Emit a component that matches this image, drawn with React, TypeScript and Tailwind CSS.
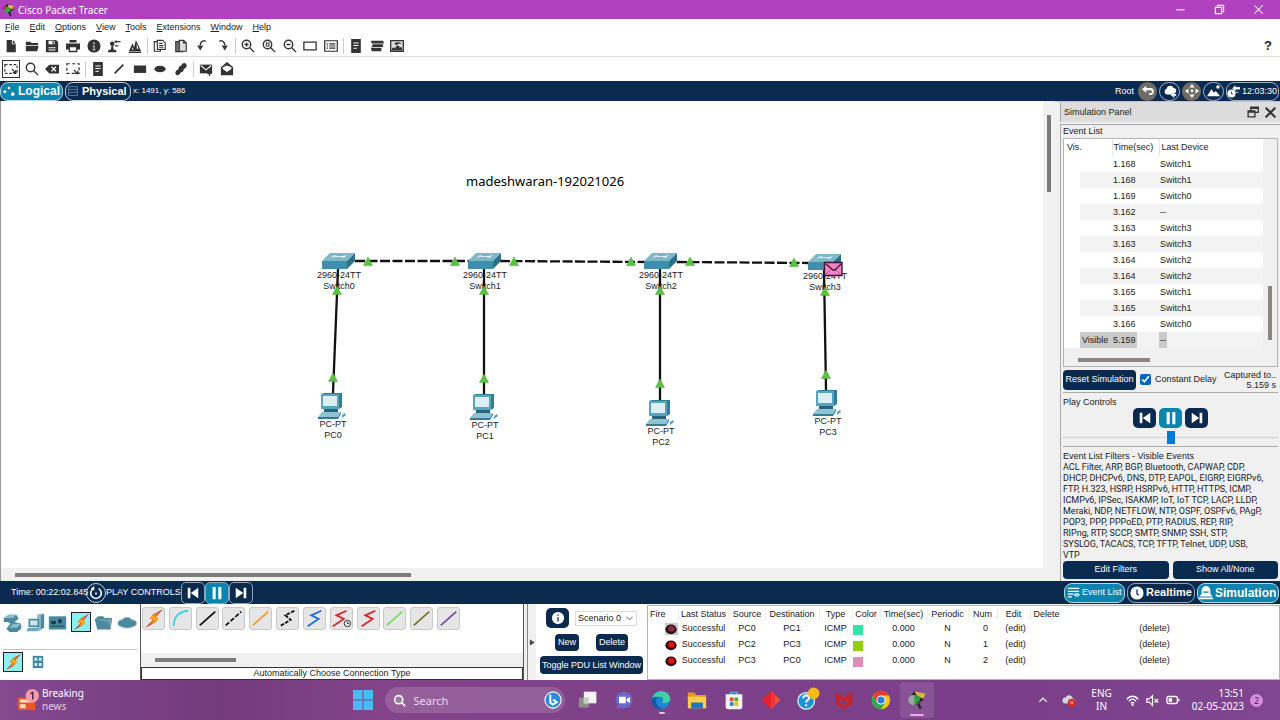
import { useState, type ReactNode } from "react";

const ARIAL = "font-['Liberation_Sans',Arial,sans-serif]";
const NOTO = "font-['Noto_Sans','Open_Sans',sans-serif]";

function Ic({ children, className = "size-3.5", box = "0 0 16 16" }: { children: ReactNode; className?: string; box?: string }) {
  return (
    <svg viewBox={box} className={className + " shrink-0"} aria-hidden="true">
      {children}
    </svg>
  );
}

const dark = "#333333";

const icons: Record<string, ReactNode> = {
  New: <path d="M3 1h6v5h4.500v9H3zM10 1l3.500 4H10z" fill={dark} />,
  Open: <path d="M1 3h5l1.500 1.500H15V7H1zM1 8h14.500L14 14H1z" fill={dark} />,
  Save: <path fillRule="evenodd" d="M1 1h11.500L15 3.500V15H1zM4 2v4h7V2zM8.500 2.600h1.600v2.700H8.500zM4 9.500v1h8v-1zM4 12v1h8v-1z" fill={dark} />,
  Print: <path fillRule="evenodd" d="M4 1h8v3H4zM0 5h16v7h-3v3H3v-3H0zM4.500 9.500v4h7v-4z" fill={dark} />,
  Information: (
    <>
      <circle cx="8" cy="8" r="7.500" fill={dark} />
      <path d="M7 3.500h2V6H7zM6.500 7H9v4.500h.8V13H6.200v-1.500H7V8.500h-.5z" fill="#999" />
    </>
  ),
  "User Profile": (
    <>
      <circle cx="6" cy="5.500" r="2.600" fill={dark} />
      <path d="M1 15c0-2 1-2.500 3.500-3L5 8h2l.5 4c2.500.5 3.500 1 3.500 3zM8 3l3-2v1.200h4.500v1.600H11V5zM9 7h4v1.500H9z" fill={dark} />
    </>
  ),
  Activity: <path d="M1 14L5 5l2 4 2-8 6 13zM1 14.500h14V16H1zM10 5v6h2zM4.500 9v3h2z" fill={dark} fillRule="evenodd" />,
  Copy: (
    <g fill="#fff" stroke={dark} strokeWidth="1.300">
      <path d="M1.500 3h7v11h-7z" />
      <path d="M5 1.500h6l3 3V12H5z" />
      <path d="M7 5h4M7 7.500h5M7 10h5" />
    </g>
  ),
  Paste: (
    <g stroke={dark} strokeWidth="1.300">
      <path d="M2 3h8v11.500H2z" fill="#777" />
      <path d="M6 1.500h5l3 3v9.500H6z" fill="#ddd" />
      <path d="M11 1.500v3h3" fill="none" />
    </g>
  ),
  Undo: (
    <>
      <path d="M6 7C6 2 11 1 12 3" fill="none" stroke={dark} strokeWidth="1.500" />
      <path d="M2.500 7.500h7L6 13z" fill={dark} />
    </>
  ),
  Redo: (
    <>
      <path d="M10 7C10 2 5 1 4 3" fill="none" stroke={dark} strokeWidth="1.500" />
      <path d="M6.500 7.500h7L10 13z" fill={dark} />
    </>
  ),
  "Zoom In": (
    <g fill="none" stroke={dark} strokeWidth="1.600">
      <circle cx="6.300" cy="6.300" r="4.800" />
      <path d="M10 10l5 5M4 6.300h4.600M6.300 4v4.600" />
    </g>
  ),
  "Zoom Reset": (
    <g fill="none" stroke={dark} strokeWidth="1.600">
      <circle cx="6.300" cy="6.300" r="4.800" />
      <path d="M10 10l5 5" />
      <path d="M5 4.500h3v3.500H5z" strokeWidth="1.200" />
    </g>
  ),
  "Zoom Out": (
    <g fill="none" stroke={dark} strokeWidth="1.600">
      <circle cx="6.300" cy="6.300" r="4.800" />
      <path d="M10 10l5 5M4 6.300h4.600" />
    </g>
  ),
  "Drawing Palette": <path d="M1 3.500h14v9H1z" fill="none" stroke={dark} strokeWidth="1.500" />,
  "Custom Devices": (
    <g fill="none" stroke={dark} strokeWidth="1.400">
      <path d="M.8 2h14.400v12H.8z" />
      <path d="M3 5.500h1.500M6 5.500h7M3 8h1.500M6 8h7M3 10.500h1.500M6 10.500h7" />
    </g>
  ),
  "View Notes": (
    <>
      <path d="M2.500 0h11v16h-11z" fill={dark} />
      <path d="M5 4.500h6M5 7.500h6M5 10.500h4" stroke="#fff" strokeWidth="1.200" />
    </>
  ),
  "Device Rack": <path d="M1 2h14l1 3H2zM3 6h12v3H2zM1 10h12v4H2z" fill={dark} />,
  "Cluster View": (
    <>
      <path d="M.8 1.800h14.400v12.400H.8z" fill="#ddd" stroke={dark} strokeWidth="1.500" />
      <path d="M2 13c0-4 3-4 4-2 1-5 5-4 5-1 2-2 3 0 3 3zM5 5c2-2 7-2 8 1l-3-1-3 2z" fill={dark} />
    </>
  ),
  Select: (
    <g fill="none" stroke={dark} strokeWidth="1.300">
      <path d="M1 3h14v10H1z" strokeDasharray="3 2" />
      <path d="M9 8l5 5M10 12h3.500V9" />
    </g>
  ),
  Inspect: (
    <g fill="none" stroke={dark} strokeWidth="1.600">
      <circle cx="6.300" cy="6.300" r="4.800" />
      <path d="M10 10l5 5" />
    </g>
  ),
  Delete: (
    <>
      <path d="M0 8l5-5h11v10H5z" fill={dark} />
      <path d="M7.500 5.500l5 5M12.500 5.500l-5 5" stroke="#fff" strokeWidth="1.500" />
    </>
  ),
  Resize: (
    <g fill="none" stroke={dark} strokeWidth="1.400">
      <path d="M1 2h14v11H1z" strokeDasharray="3.500 2.500" />
      <path d="M9 9l5 5M10 13h3.500v-3" />
    </g>
  ),
  "Draw Line": <path d="M3 13L13 3" stroke={dark} strokeWidth="1.800" />,
  "Draw Rectangle": <path d="M1 4h14v8.500H1z" fill={dark} />,
  "Draw Ellipse": <ellipse cx="8" cy="8" rx="6.500" ry="3.600" fill={dark} />,
  "Draw Freeform": <path d="M2.500 14.500c-2-2-.5-5.500 2.500-6 0-3 2-4.500 3.500-4.500 1-4 6-3.500 6 0 0 2-1.500 3.500-3.500 4 .500 3-2 3.500-3.500 4-1 3-3.500 4-5 2.500z" fill={dark} />,
  "Simple PDU": (
    <>
      <path d="M1 3h14v10H1z" fill={dark} />
      <path d="M2 4l6 5 6-5" fill="none" stroke="#fff" strokeWidth="1.300" />
      <path d="M12 10v6M9.500 13h5" stroke={dark} strokeWidth="1.500" />
    </>
  ),
  "Complex PDU": (
    <>
      <path d="M1 6l7-6 7 6v9H1z" fill={dark} />
      <path d="M3 6l5-2 5 2v2l-5 3.500L3 8z" fill="#fff" />
    </>
  ),
};

function ToolGroup({ names, className, active }: { names: string[]; className: string; active?: string }) {
  return (
    <div className={"flex items-center justify-between " + className}>
      {names.map((name) => (
        <button key={name} type="button" aria-label={name} className={active === name ? "-m-px outline outline-[#333] p-px" : ""}>
          <Ic>{icons[name]}</Ic>
        </button>
      ))}
    </div>
  );
}

function Sep() {
  return <span className="mx-[5px] h-4 w-px bg-[#cccccc]" />;
}

const menu = ["File", "Edit", "Options", "View", "Tools", "Extensions", "Window", "Help"];

function TitleBar() {
  return (
    <header className={`flex h-[19px] items-center bg-[#b042c0] pl-0.5 text-white ${NOTO}`}>
      <Ic className="size-[14px]">
        <path d="M1 6l5-5 8 2-1 5-6 4z" fill="#3b2c24" />
        <path d="M7 2l7 1-2 4-5-2z" fill="#f2b53c" />
        <path d="M3 5c3-2 7 0 7 3 0 2-3 4-5 3S2 7 3 5z" fill="#2fae3c" />
        <path d="M2 4l3 1-1 3H2z" fill="#d23a32" />
        <path d="M8 10l2 5" stroke="#222" strokeWidth="2" />
      </Ic>
      <h1 className="ml-0.5 grow text-[10px] leading-none">Cisco Packet Tracer</h1>
      <div className="flex items-center gap-7 pr-4">
        <button type="button" aria-label="Minimize"><Ic className="size-[11px]"><path d="M2 8.500h12" stroke="#fff" strokeWidth="1.500" /></Ic></button>
        <button type="button" aria-label="Restore">
          <Ic className="size-[11px]"><path d="M2 5h9v9H2zM5 5V2h9v9h-3" fill="none" stroke="#fff" strokeWidth="1.700" /></Ic>
        </button>
        <button type="button" aria-label="Close"><Ic className="size-[11px]"><path d="M2 2l12 12M14 2L2 14" stroke="#fff" strokeWidth="1.500" /></Ic></button>
      </div>
    </header>
  );
}

function Toolbars() {
  return (
    <>
      <nav className="flex h-4 items-center gap-2.5 bg-white pl-[5px]">
        {menu.map((item) => (
          <button key={item} type="button" className="text-[9px] leading-none">
            <span className="underline underline-offset-1">{item[0]}</span>
            {item.slice(1)}
          </button>
        ))}
      </nav>
      <div className="flex h-[22px] items-center border-b border-[#dddddd] bg-white pr-2 pl-1">
        <ToolGroup className="w-[138px]" names={["New", "Open", "Save", "Print", "Information", "User Profile", "Activity"]} />
        <Sep />
        <ToolGroup className="w-[77px]" names={["Copy", "Paste", "Undo", "Redo"]} />
        <Sep />
        <ToolGroup className="w-[97px]" names={["Zoom In", "Zoom Reset", "Zoom Out", "Drawing Palette", "Custom Devices"]} />
        <Sep />
        <ToolGroup className="w-[55px]" names={["View Notes", "Device Rack", "Cluster View"]} />
        <button type="button" className="ml-auto text-[13px] leading-none font-bold text-[#222]">?</button>
      </div>
      <div className="flex h-6 items-center bg-white pl-1">
        <ToolGroup className="w-[76px]" active="Select" names={["Select", "Inspect", "Delete", "Resize"]} />
        <Sep />
        <ToolGroup className="w-[97px]" names={["View Notes", "Draw Line", "Draw Rectangle", "Draw Ellipse", "Draw Freeform"]} />
        <Sep />
        <ToolGroup className="w-[35px]" names={["Simple PDU", "Complex PDU"]} />
      </div>
    </>
  );
}

function NavBar() {
  return (
    <div className="flex h-5 items-center bg-[#0a2a50] pr-px text-white">
      <button type="button" className="flex h-[19px] w-[63px] items-center gap-[3px] rounded-lg border border-[#b8d8e8] bg-[#0b84ae] pl-0.5 text-[12px] leading-none font-bold">
        <Ic className="size-3"><g fill="#fff"><circle cx="2.500" cy="9" r="2" /><circle cx="8" cy="4" r="1.800" /><circle cx="13" cy="12" r="2.500" /></g></Ic>
        Logical
      </button>
      <button type="button" className="ml-0.5 flex h-[19px] w-[66px] items-center gap-1 rounded-lg border border-[#c8d0dc] pl-0.5 text-[11px] leading-none font-bold">
        <Ic className="size-2.5"><path d="M1 1h14v14H1zM1 5.500h14M1 10h14" fill="none" stroke="#5c7ba2" strokeWidth="1.600" /></Ic>
        Physical
      </button>
      <span className="ml-0.5 grow text-[8px] leading-none">x: 1491, y: 586</span>
      <span className="mr-1 text-[9px] leading-none">Root</span>
      <div className="flex items-center gap-0.5">
        <button type="button" aria-label="Back" className="flex size-[19px] items-center justify-center rounded-full bg-[#6e6b62]">
          <Ic><path d="M1 6l5-4v2.500h5c5 0 5 8 0 8H9v-2h2c2 0 2-3.500 0-3.500H6V10z" fill="#fff" /></Ic>
        </button>
        <button type="button" aria-label="New Cluster" className="flex h-[19px] w-[21px] items-center justify-center rounded-full border border-[#9fb0c6]">
          <Ic><path d="M4 12a3.500 3.500 0 010-6.500C5 1 11 1 12 4.500c4 0 4 5 1 6.500v-1h-2v2z" fill="#fff" /><path d="M12 9.500v6M9 12.500h6" stroke="#fff" strokeWidth="2" /></Ic>
        </button>
        <button type="button" aria-label="Move Object" className="flex size-[19px] items-center justify-center rounded-full bg-[#6e6b62]">
          <Ic><path d="M8 0l3 4H5zM8 16l3-4H5zM0 8l4-3v6zM16 8l-4-3v6z" fill="#fff" /><circle cx="8" cy="8" r="1.600" fill="#fff" /></Ic>
        </button>
        <button type="button" aria-label="Set Background" className="flex h-[19px] w-[21px] items-center justify-center rounded-full border border-[#9fb0c6]">
          <Ic><path d="M0 14l5-8 3 4 2-2 5 6z" fill="#fff" /><circle cx="12.500" cy="3.500" r="2" fill="#fff" /></Ic>
        </button>
        <button type="button" className="flex h-[19px] w-[53px] items-center gap-0.5 rounded-lg border border-[#9fb0c6] text-[9px] leading-none whitespace-nowrap">
          <Ic className="size-[13px]"><circle cx="5.500" cy="10.500" r="5" fill="#fff" /><path d="M7 4l3-3v2h6v2h-6v2zM10 9h4" stroke="#fff" fill="#fff" /><path d="M5.500 8v3h2" stroke="#0a2a50" fill="none" /></Ic>
          12:03:30
        </button>
      </div>
    </div>
  );
}

const switches = [
  { name: "Switch0", x: 339, y: 152 },
  { name: "Switch1", x: 485, y: 152 },
  { name: "Switch2", x: 661, y: 152 },
  { name: "Switch3", x: 825, y: 153 },
];
const pcs = [
  { name: "PC0", x: 332, y: 292 },
  { name: "PC1", x: 484, y: 293 },
  { name: "PC2", x: 660, y: 299 },
  { name: "PC3", x: 827, y: 289 },
];
const trunks = [
  [355, 160, 470, 160],
  [500, 160, 646, 161],
  [677, 161, 809, 162],
];
const drops = [
  [338, 168, 333, 292],
  [484, 168, 484, 293],
  [660, 168, 660, 299],
  [824, 169, 826, 289],
];
const lights = [
  [368, 161], [455, 161], [514, 161], [631, 161], [690, 161], [794, 162],
  [337, 190], [333, 277], [484, 190], [484, 278], [660, 190], [660, 283], [825, 191], [826, 274],
];

function NodeLabel({ x, y, lines }: { x: number; y: number; lines: string[] }) {
  return (
    <div className="absolute -translate-x-1/2 text-center text-[9px] leading-[11px] whitespace-nowrap text-[#222]" style={{ left: x, top: y }}>
      {lines.map((line) => (
        <div key={line}>{line}</div>
      ))}
    </div>
  );
}

function Workspace() {
  return (
    <section className="flex min-w-0 grow flex-col">
      <div className="flex grow">
        <div className="relative grow overflow-hidden border-l border-[#999] bg-white">
          <p className={`absolute top-[71px] left-[465px] text-[13px] leading-[18px] whitespace-nowrap text-black ${NOTO}`}>madeshwaran-192021026</p>
          {switches.map((s) => (
            <NodeLabel key={s.name} x={s.x - 1} y={s.y + 17} lines={["2960-24TT", s.name]} />
          ))}
          {pcs.map((p) => (
            <NodeLabel key={p.name} x={p.x} y={p.y + 26} lines={["PC-PT", p.name]} />
          ))}
          <svg className="absolute top-0 -left-px h-full w-full overflow-visible" aria-hidden="true">
            {trunks.map(([x1, y1, x2, y2]) => (
              <line key={x1} x1={x1} y1={y1} x2={x2} y2={y2} stroke="#111" strokeWidth="2.300" strokeDasharray="10 2.500" />
            ))}
            {drops.map(([x1, y1, x2, y2]) => (
              <line key={x1} x1={x1} y1={y1} x2={x2} y2={y2} stroke="#111" strokeWidth="2.300" />
            ))}
            {switches.map((s) => (
              <g key={s.name} transform={`translate(${s.x - 17} ${s.y})`}>
                <path d="M0 8L8 0h25l-8 8z" fill="#7fb6c8" />
                <path d="M0 8h25v8H0z" fill="#3f8fa8" />
                <path d="M25 8l8-8v8l-8 8z" fill="#2b7088" />
                <path d="M8 5l4-3 3 1h6l4-1-3 3-4-1h-6z" fill="#d8eef4" />
              </g>
            ))}
            {pcs.map((p) => (
              <g key={p.name} transform={`translate(${p.x - 14} ${p.y})`}>
                <path d="M3 1l3-1h18v14l-3 2H3z" fill="#2f7d96" />
                <path d="M3 1h18v15H3z" fill="#57a5ba" />
                <path d="M5 3h14v10H5z" fill="#dceef2" />
                <path d="M6 16h14v4H6z" fill="#22667d" />
                <path d="M4 19h19l-3 5H0z" fill="#8fc3d1" />
                <path d="M0 24h20l3-5v2l-3 5H0z" fill="#2f7d96" />
                <path d="M24 22l3-2 1 2-4 3z" fill="#57a5ba" />
              </g>
            ))}
            {lights.map(([x, y]) => (
              <path key={`${x}-${y}`} d={`M${x} ${y - 5}l4.500 8.500h-9z`} fill="#5cc13f" stroke="#4aa833" strokeWidth=".5" />
            ))}
            <path d="M824.500 161.500h17.500v13h-17.500z" fill="#f583c8" stroke="#3a1530" strokeWidth="1.400" />
            <path d="M826 163l7 6h2l6-6" fill="none" stroke="#3a1530" strokeWidth="1.300" />
            <path d="M825 174l5-5M841 174l-5-5" stroke="#b04c8c" strokeWidth=".8" />
          </svg>
        </div>
        <div className="flex w-3 shrink-0 justify-center bg-[#f1f1f1] pt-3.5">
          <div className="h-[77px] w-1 bg-[#7c7c7c]" />
        </div>
      </div>
      <div className="flex h-[13px] items-center border-l border-[#999] bg-[#f1f1f1] pl-3.5">
        <div className="h-1 w-[396px] bg-[#7c7c7c]" />
      </div>
    </section>
  );
}

const events = [
  ["", "1.168", "Switch1"],
  ["", "1.168", "Switch1"],
  ["", "1.169", "Switch0"],
  ["", "3.162", "--"],
  ["", "3.163", "Switch3"],
  ["", "3.163", "Switch3"],
  ["", "3.164", "Switch2"],
  ["", "3.164", "Switch2"],
  ["", "3.165", "Switch1"],
  ["", "3.165", "Switch1"],
  ["", "3.166", "Switch0"],
  ["Visible", "5.159", "--"],
];

const filters = [
  "ACL Filter, ARP, BGP, Bluetooth, CAPWAP, CDP,",
  "DHCP, DHCPv6, DNS, DTP, EAPOL, EIGRP, EIGRPv6,",
  "FTP, H.323, HSRP, HSRPv6, HTTP, HTTPS, ICMP,",
  "ICMPv6, IPSec, ISAKMP, IoT, IoT TCP, LACP, LLDP,",
  "Meraki, NDP, NETFLOW, NTP, OSPF, OSPFv6, PAgP,",
  "POP3, PPP, PPPoED, PTP, RADIUS, REP, RIP,",
  "RIPng, RTP, SCCP, SMTP, SNMP, SSH, STP,",
  "SYSLOG, TACACS, TCP, TFTP, Telnet, UDP, USB,",
  "VTP",
];

const prevIcon = <path d="M2 2h3v12H2zM14 2v12L5.500 8z" fill="#fff" />;
const pauseIcon = <path d="M3 1h3.500v14H3zM9.500 1H13v14H9.500z" fill="#fff" />;
const nextIcon = <path d="M11 2h3v12h-3zM2 2l8.500 6L2 14z" fill="#fff" />;

function PlayButtons({ outlined }: { outlined?: boolean }) {
  const edge = outlined ? "border border-[#8fa3bd] h-[22px] w-6" : "h-5 w-[23px]";
  const list = [
    { label: "Step back", icon: prevIcon, bg: "bg-[#0a2a50]" },
    { label: "Pause", icon: pauseIcon, bg: "bg-[#0b84ae]" },
    { label: "Step forward", icon: nextIcon, bg: "bg-[#0a2a50]" },
  ];
  return (
    <div className={outlined ? "flex" : "flex justify-center gap-[3px]"}>
      {list.map((b) => (
        <button key={b.label} type="button" aria-label={b.label} className={`flex items-center justify-center rounded-[5px] ${edge} ${b.bg}`}>
          <Ic className="size-3.5">{b.icon}</Ic>
        </button>
      ))}
    </div>
  );
}

function SimulationPanel() {
  const [constant, setConstant] = useState(true);
  return (
    <aside className="flex w-[225px] shrink-0 flex-col border-t border-[#c4c4c4] bg-[#f0f0f0] pl-[5px] text-[9px] text-[#222]">
      <div className="flex h-5 shrink-0 items-center border-l border-[#aaa] bg-[#dcdcdc] pr-1 pl-[3px]">
        <h2 className="grow leading-none">Simulation Panel</h2>
        <button type="button" aria-label="Float"><Ic className="size-3"><path d="M5 6V1.500h10v7h-4M1.500 6.500h9v8h-9zM1 8h10M5 3h10" fill="none" stroke="#333" strokeWidth="1.800" /></Ic></button>
        <button type="button" aria-label="Close panel" className="ml-1.5"><Ic className="size-[11px]"><path d="M1 1l14 14M15 1L1 15" stroke="#333" strokeWidth="3" /></Ic></button>
      </div>
      <div className="mt-0.5 flex grow flex-col border-t border-l border-[#aaa] pr-0.5 pl-0.5">
        <h3 className="h-[13px] leading-[13px]">Event List</h3>
        <div className="flex h-[229px] flex-col border border-[#b5b5b5]">
          <div className="flex grow">
            <table className="grow table-fixed border-collapse self-start bg-white text-left">
              <colgroup>
                <col className="w-4" />
                <col className="w-8" />
                <col className="w-[47px]" />
                <col />
              </colgroup>
              <thead>
                <tr className="h-[17px]">
                  <th colSpan={2} className="pl-[3px] font-normal">Vis.</th>
                  <th className="border-l border-[#e6e6e6] pl-px font-normal">Time(sec)</th>
                  <th className="border-l border-[#e6e6e6] pl-0.5 font-normal">Last Device</th>
                </tr>
              </thead>
              <tbody>
                {events.map(([vis, time, device], i) => {
                  const last = vis !== "";
                  const bg = i % 2 ? "bg-[#f3f3f3]" : "bg-white";
                  return (
                    <tr key={i} className="h-4 leading-4">
                      <td className="bg-white" />
                      <td className={`p-0 pl-0.5 ${last ? "bg-[#cacaca]" : bg}`}>{vis}</td>
                      <td className={bg}>
                        <span className={`inline-block px-px ${last ? "bg-[#cacaca]" : ""}`}>{time}</span>
                      </td>
                      <td className={bg}>
                        <span className={`inline-block px-px ${last ? "bg-[#cacaca]" : ""}`}>{device}</span>
                      </td>
                    </tr>
                  );
                })}
              </tbody>
            </table>
            <div className="flex w-3.5 shrink-0 items-end justify-center pb-3.5">
              <div className="h-[54px] w-1 bg-[#8a8783]" />
            </div>
          </div>
          <div className="flex h-3 shrink-0 items-center pl-3.5">
            <div className="h-1 w-[72px] bg-[#8a8783]" />
          </div>
        </div>
        <div className="flex h-[25px] items-center">
          <button type="button" className="h-5 w-[73px] rounded-[4px] bg-[#0a2a50] leading-none whitespace-nowrap text-white">Reset Simulation</button>
          <label className="ml-1 flex items-center gap-1 whitespace-nowrap">
            <input type="checkbox" checked={constant} onChange={(e) => setConstant(e.target.checked)} className="size-[11px] accent-[#0067c0]" />
            Constant Delay
          </label>
          <div className="ml-auto pr-0.5 text-right text-[9px] leading-2.5 whitespace-nowrap">
            <div>Captured to..</div>
            <div>5.159 s</div>
          </div>
        </div>
        <div className="border-t border-[#aaa] pt-[3px]">
          <h3 className="h-3 leading-3">Play Controls</h3>
          <PlayButtons />
          <input
            type="range"
            aria-label="Play speed"
            defaultValue={50}
            className="my-0.5 block h-[14px] w-full appearance-none bg-[linear-gradient(#d2d2d2,#d2d2d2)] bg-[length:100%_1px] bg-center bg-no-repeat [&::-webkit-slider-thumb]:h-[13px] [&::-webkit-slider-thumb]:w-2 [&::-webkit-slider-thumb]:appearance-none [&::-webkit-slider-thumb]:bg-[#0078d7]"
          />
        </div>
        <div className="flex grow flex-col border-t border-[#aaa] pt-[3px] pb-0.5">
          <h3 className="h-3 leading-3">Event List Filters - Visible Events</h3>
          <p className="font-[Roboto,sans-serif] leading-[11px] whitespace-nowrap">
            {filters.map((line) => (
              <span key={line} className="block">{line}</span>
            ))}
          </p>
          <div className="mt-auto flex gap-1">
            <button type="button" className="h-[18px] grow basis-0 rounded-[4px] bg-[#0a2a50] text-white">Edit Filters</button>
            <button type="button" className="h-[18px] grow basis-0 rounded-[4px] bg-[#0a2a50] text-white">Show All/None</button>
          </div>
        </div>
      </div>
    </aside>
  );
}

function StatusBar() {
  return (
    <div className="flex h-[23px] items-center bg-[#0a2a50] pr-px pl-[11px] text-white">
      <span className="w-[75px] text-[9px] leading-none whitespace-nowrap">Time: 00:22:02.845</span>
      <button type="button" aria-label="Power cycle devices" className="flex size-5 items-center justify-center rounded-full border border-[#c8d0dc]">
        <Ic><path d="M5 3a6 6 0 106 0" fill="none" stroke="#fff" strokeWidth="1.800" /><path d="M6 0v5L2 3z" fill="#fff" /><circle cx="8" cy="8.500" r="1.200" fill="#fff" /></Ic>
      </button>
      <span className="w-[75px] text-[9px] leading-none whitespace-nowrap">PLAY CONTROLS:</span>
      <PlayButtons outlined />
      <div className="ml-auto flex items-center gap-0.5 leading-none">
        <button type="button" className="flex h-5 w-[61px] items-center gap-0.5 rounded-lg border border-[#b8d8e8] bg-[#0b84ae] pl-0.5 text-[9px] whitespace-nowrap">
          <Ic className="size-[13px]"><path d="M1 3h14M1 6.500h14M1 10h7M1 13.500h5M9 11q3-3 6 0-3 3-6 0" fill="none" stroke="#fff" strokeWidth="1.500" /></Ic>
          Event List
        </button>
        <button type="button" className="flex h-5 w-[68px] items-center gap-0.5 rounded-lg border border-[#8fa3bd] pl-0.5 text-[11px] font-bold">
          <Ic><circle cx="8" cy="8" r="7.500" fill="#fff" /><path d="M8 4v5l2 1.500" fill="none" stroke="#0a2a50" strokeWidth="1.500" /></Ic>
          Realtime
        </button>
        <button type="button" className="flex h-5 w-[82px] items-center gap-0.5 rounded-lg border border-[#b8d8e8] bg-[#0b84ae] pl-px text-[12px] font-bold">
          <Ic><path d="M3 9V5a5 5 0 0110 0v4l2 2v1H1v-1zM0 13h16v2H0z" fill="#fff" /><path d="M5 7h6" stroke="#0b84ae" strokeWidth="1.500" /></Ic>
          Simulation
        </button>
      </div>
    </div>
  );
}

const bolt = (
  <>
    <path d="M22 1L11 7l-4 5 5-1-3 4-7 7 11-6 4-5-5 1z" fill="#d63a25" />
    <path d="M18 4l-9 5-1 3 4 1-4 5 9-5-1-3-3-1z" fill="#f9a51c" />
  </>
);

const cables: { name: string; art: ReactNode }[] = [
  { name: "Automatic", art: bolt },
  { name: "Console", art: <path d="M4 20C4 9 10 4 20 3" fill="none" stroke="#45d3e4" strokeWidth="2" /> },
  { name: "Straight-Through", art: <path d="M3 19L20 4" stroke="#111" strokeWidth="2" /> },
  { name: "Cross-Over", art: <path d="M3 19L20 4" stroke="#111" strokeWidth="2" strokeDasharray="5 2" /> },
  { name: "Fiber", art: <path d="M3 19L20 4" stroke="#f0a030" strokeWidth="2" /> },
  { name: "Phone", art: <path d="M19 3L9 8l6 5-12 7" fill="none" stroke="#111" strokeWidth="2" strokeDasharray="4 1.500" /> },
  { name: "Coaxial", art: <path d="M19 3L8 8l8 4-12 8" fill="none" stroke="#1c6fd6" strokeWidth="2" /> },
  {
    name: "Serial DCE",
    art: (
      <>
        <path d="M17 3L6 8l8 4-12 8" fill="none" stroke="#d9262c" strokeWidth="2" />
        <circle cx="18" cy="17" r="3.500" fill="#eee" stroke="#222" />
        <path d="M18 15v2h2" fill="none" stroke="#222" />
      </>
    ),
  },
  { name: "Serial DTE", art: <path d="M19 3L8 8l8 4-12 8" fill="none" stroke="#d9262c" strokeWidth="2" /> },
  { name: "Octal", art: <path d="M3 19L20 4" stroke="#6fe25a" strokeWidth="2" /> },
  { name: "IoT Custom Cable", art: <path d="M3 19L20 4" stroke="#7a7626" strokeWidth="2" /> },
  { name: "USB", art: <path d="M3 19L20 4" stroke="#7a4fa5" strokeWidth="2" /> },
];

const teal = "#4a8a9c";
const deviceKinds: { name: string; art: ReactNode }[] = [
  {
    name: "Network Devices",
    art: (
      <>
        <path d="M1 6l6-4h9l3 5-5 4 8 2v6l-5 4H8l-4-4 5-6-3-2H1z" fill={teal} />
        <path d="M1 6l6-4h9l-4 4zM8 18l4-5h10l-5 5z" fill="#8dbccb" />
      </>
    ),
  },
  {
    name: "End Devices",
    art: (
      <>
        <path d="M14 2l8-1v17l-8 4z" fill={teal} />
        <path d="M14 2l3-1h5l-4 2v18l-4 1z" fill="#8dbccb" />
        <path d="M3 7h13v10H3z" fill={teal} />
        <path d="M5 9h9v6H5z" fill="#cfe4ea" />
        <path d="M3 18h13l-3 4H0z" fill="#6ea6b7" />
      </>
    ),
  },
  { name: "Components", art: <><path d="M1 4h21v16H1z" fill={teal} /><path d="M4 10h5v3H4zM13 8h3v4h-3zM3 16h17" fill="#1f3a42" stroke="#1f3a42" /></> },
];

function DevicePicker() {
  return (
    <div className="w-[140px] shrink-0 bg-white px-[3px]">
      <div className="flex h-9 items-center justify-between">
        {deviceKinds.map((d) => (
          <button key={d.name} type="button" aria-label={d.name}>
            <Ic box="0 0 23 23" className="size-[19px]">{d.art}</Ic>
          </button>
        ))}
        <button type="button" aria-label="Connections" className="border border-[#222] bg-[#8ceff0]">
          <Ic box="0 0 23 23" className="size-[18px]">{bolt}</Ic>
        </button>
        <button type="button" aria-label="Miscellaneous">
          <Ic box="0 0 23 23" className="size-[19px]"><path d="M5 4h6l2 2h9l-2 14H4L1 8z" fill={teal} /><path d="M1 8h17l3-2-1 14-3-9z" fill="#6ea6b7" /></Ic>
        </button>
        <button type="button" aria-label="Multiuser Connection">
          <Ic box="0 0 23 23" className="size-5"><path d="M5 17c-6-1-5-8 1-8 2-4 9-4 11 0 7 0 7 7 1 8-3 2-10 2-13 0z" fill={teal} stroke="#9fc7d2" /></Ic>
        </button>
      </div>
      <div className="h-[10px] border-b border-[#c4c4c4]" />
      <div className="mt-0.5 flex items-center gap-2">
        <button type="button" aria-label="Connections group" className="border border-[#222] bg-[#8ceff0]">
          <Ic box="0 0 23 23" className="size-[18px]">{bolt}</Ic>
        </button>
        <button type="button" aria-label="Structured cabling">
          <Ic><path d="M2 1h12v14H2z" fill="#3f88a0" /><path d="M4 3h3v3.500H4zM9 3h3v3.500H9zM4 9h3v3.500H4zM9 9h3v3.500H9z" fill="#d8edf3" /></Ic>
        </button>
      </div>
    </div>
  );
}

const pdus = [
  { from: "PC0", to: "PC1", color: "bg-[#2ee6a6]", num: 0 },
  { from: "PC2", to: "PC3", color: "bg-[#8ed000]", num: 1 },
  { from: "PC3", to: "PC0", color: "bg-[#dd8cbc]", num: 2 },
];

function BottomPanel() {
  return (
    <div className="flex h-[76px] bg-[#f0f0f0] text-[9px] leading-none text-[#222]">
      <DevicePicker />
      <div className="flex w-[384px] shrink-0 flex-col border-x border-[#555] bg-white">
        <div className="flex w-[319px] justify-between pt-[3px] pl-px">
          {cables.map((c) => (
            <button key={c.name} type="button" aria-label={c.name} className="rounded-[3px] border border-[#c8c8c8] bg-[#e6e6e6]">
              <Ic box="0 0 23 23" className="size-[21px]">{c.art}</Ic>
            </button>
          ))}
        </div>
        <div className="mt-auto flex h-[14px] items-center bg-[#f0f0f0] pl-3.5">
          <div className="h-1 w-[81px] bg-[#7c7c7c]" />
        </div>
        <div className="flex h-[13px] items-center justify-center border border-[#333] bg-white">Automatically Choose Connection Type</div>
      </div>
      <div className="ml-[3px] flex w-[9px] shrink-0 items-center border-l border-[#888] bg-[#f0f0f0]">
        <Ic className="ml-px size-[7px]"><path d="M2 1l11 7-11 7z" fill="#444" /></Ic>
      </div>
      <div className="flex w-[111px] shrink-0 flex-col items-center bg-white pt-1">
        <div className="flex items-center gap-1.5">
          <button type="button" aria-label="Scenario info" className="flex h-5 w-[23px] items-center justify-center rounded-[5px] bg-[#0a2a50]">
            <Ic><circle cx="8" cy="8" r="7" fill="#fff" /><path d="M8 4v1.500M8 7v5" stroke="#0a2a50" strokeWidth="1.500" /></Ic>
          </button>
          <div className="relative">
            <select aria-label="Scenario" className="h-[15px] w-[62px] appearance-none border border-[#ddd] bg-white pl-0.5 text-[9px] leading-none">
              <option>Scenario 0</option>
            </select>
            <svg viewBox="0 0 8 8" className="pointer-events-none absolute top-1 right-1 size-[7px]" aria-hidden="true"><path d="M.5 2L4 5.500 7.500 2" fill="none" stroke="#444" /></svg>
          </div>
        </div>
        <div className="mt-1.5 flex gap-[17px]">
          <button type="button" className="h-[17px] w-6 rounded-[4px] bg-[#0a2a50] text-white">New</button>
          <button type="button" className="h-[17px] w-8 rounded-[4px] bg-[#0a2a50] text-white">Delete</button>
        </div>
        <button type="button" className="mt-[5px] h-[18px] w-[103px] rounded-[4px] bg-[#0a2a50] whitespace-nowrap text-white">Toggle PDU List Window</button>
      </div>
      <div className="mt-px grow border border-[#b5b5b5] bg-white pt-0.5">
        <table className="w-full table-fixed text-center whitespace-nowrap">
          <colgroup>
            <col className="w-[30px]" />
            <col className="w-[51px]" />
            <col className="w-9" />
            <col className="w-[54px]" />
            <col className="w-[33px]" />
            <col className="w-7" />
            <col className="w-[47px]" />
            <col className="w-[41px]" />
            <col className="w-[29px]" />
            <col className="w-[33px]" />
            <col />
          </colgroup>
          <thead>
            <tr className="h-3 [&>th]:font-normal [&>th+th]:border-l [&>th+th]:border-[#eeeeee]">
              <th className="pl-0.5 text-left">Fire</th>
              <th>Last Status</th>
              <th>Source</th>
              <th>Destination</th>
              <th>Type</th>
              <th>Color</th>
              <th>Time(sec)</th>
              <th>Periodic</th>
              <th>Num</th>
              <th>Edit</th>
              <th className="pl-[3px] text-left">Delete</th>
            </tr>
          </thead>
          <tbody>
            {pdus.map((p, i) => (
              <tr key={p.num} className="h-4">
                <td>
                  <button type="button" aria-label={`Fire ${p.from}`} className={`mt-0.5 ml-[17px] flex h-3 w-[13px] items-center ${i === 0 ? "bg-[#c9ced6]" : ""}`}>
                    <Ic className="size-3"><ellipse cx="8" cy="8.500" rx="7.500" ry="6.500" fill="#241010" /><ellipse cx="8.500" cy="7.500" rx="4.500" ry="4" fill={i === 0 ? "#8c2c3c" : "#e01212"} /></Ic>
                  </button>
                </td>
                <td>Successful</td>
                <td>{p.from}</td>
                <td>{p.to}</td>
                <td>ICMP</td>
                <td><span className={`mt-1 ml-px block size-2.5 ${p.color}`} /></td>
                <td>0.000</td>
                <td>N</td>
                <td className="pl-1.5">{p.num}</td>
                <td className="pl-1"><button type="button">(edit)</button></td>
                <td><button type="button">(delete)</button></td>
              </tr>
            ))}
          </tbody>
        </table>
      </div>
    </div>
  );
}

const apps: { name: string; art: ReactNode }[] = [
  { name: "Task View", art: <><path d="M1 9h12v12H1z" fill="#8d9087" /><path d="M7 2h15v14H7z" fill="#f5f3f5" /><path d="M7 9h6v7H7z" fill="#c9cbc5" /></> },
  { name: "Chat", art: <><circle cx="12" cy="12" r="10" fill="#6a68c9" /><path d="M3 22l2-6 6 5z" fill="#6a68c9" /><path d="M6 8h8v8H6zM15 11l4-3v8l-4-3z" fill="#fff" /></> },
  { name: "Edge", art: <><circle cx="12" cy="12" r="11" fill="#1c86d6" /><path d="M2 9C5-1 20-1 23 9c1 6-6 8-10 6 4-4 0-8-4-7-3 0-6 2-7 5z" fill="#3fcfa5" /><path d="M8 9c-5 5 0 13 7 13C7 25 0 19 1 12c1-4 5-5 7-3z" fill="#1257a8" /></> },
  { name: "File Explorer", art: <><path d="M1 3h8l2 3h12v5H1z" fill="#e09c1c" /><path d="M1 8h22v14H1z" fill="#fbce4b" /><path d="M5 15h14v7H5z" fill="#1b78c8" /></> },
  { name: "Store", art: <><path d="M8 6V3h8v3" fill="none" stroke="#4db4e8" strokeWidth="2" /><path d="M2 5h20v15q0 3-3 3H5q-3 0-3-3z" fill="#f4f4f4" /><path d="M7 9h4.500v4.500H7z" fill="#e34c28" /><path d="M12.500 9H17v4.500h-4.500z" fill="#6aa51e" /><path d="M7 14.500h4.500V19H7z" fill="#1b8fd6" /><path d="M12.500 14.500H17V19h-4.500z" fill="#f3b51e" /></> },
  { name: "Diamond", art: <><path d="M12 1L1 12l11 11z" fill="#e8222c" /><path d="M12 1l11 11-11 11z" fill="#f4532a" /><path d="M12 1l5 5v12l-5 5z" fill="#f03340" /></> },
  { name: "Get Help", art: <><circle cx="11" cy="13" r="10" fill="#1b95d8" stroke="#e6f4fb" strokeWidth="1.500" /><path d="M7.500 10c0-5 8-4.500 7 0-.5 2-3.500 2-3.500 5M11 17v2.500" fill="none" stroke="#fff" strokeWidth="2.500" /><circle cx="20" cy="4" r="7" fill="#f9b91a" /></> },
  { name: "McAfee", art: <path d="M2 3l6 3 4 3 4-3 6-3v14l-10 6-10-6zM7 11v5l5 2.500 5-2.500v-5l-5 4z" fill="#c3272d" fillRule="evenodd" /> },
  { name: "Chrome", art: <><circle cx="12" cy="12" r="11" fill="#f5c518" /><path d="M2.500 6.500A11 11 0 0121.500 6.500H12L7 15z" fill="#e33b2e" /><path d="M2.500 6.500A11 11 0 0012 23l5-8H7z" fill="#2da94f" /><circle cx="12" cy="12" r="5.500" fill="#fff" /><circle cx="12" cy="12" r="4.300" fill="#2f7de1" /></> },
];

function Taskbar() {
  return (
    <footer className={`grid h-10 grid-cols-[1fr_auto_1fr] items-center bg-[linear-gradient(90deg,#84498f,#733a7c_17%,#84448a_30%,#7c4188_55%,#7b3f8a_80%,#80468f)] text-white ${NOTO}`}>
      <div className="flex items-center gap-[3px] pl-4">
        <Ic box="0 0 24 24" className="size-[23px]">
          <path d="M2 9h18v13H2z" fill="#e8562a" />
          <path d="M4 11h14v3H4zM4 16h6v4H4z" fill="#fbd9c8" />
          <circle cx="17" cy="7" r="7" fill="#f29bb0" />
          <path d="M15 5l2.500-1.500V11" fill="none" stroke="#40222e" strokeWidth="1.400" />
        </Ic>
        <div className="text-[10px] leading-[13px]">
          <div>Breaking</div>
          <div className="text-[#e3cde6]">news</div>
        </div>
      </div>
      <div className="flex items-center">
        <button type="button" aria-label="Start">
          <Ic box="0 0 20 20" className="size-5"><path d="M0 0h9.500v9.500H0zM10.500 0H20v9.500h-9.500zM0 10.500h9.500V20H0zM10.500 10.500H20V20h-9.500z" fill="#44bdf5" /></Ic>
        </button>
        <label className="ml-3 flex h-[26px] w-[180px] items-center gap-2 rounded-full bg-white/15 pr-[3px] pl-2">
          <Ic className="size-[13px]"><circle cx="7" cy="7" r="5" fill="#9b7ba6" stroke="#fff" strokeWidth="2" /><path d="M11 11l4 4" stroke="#fff" strokeWidth="2.200" /></Ic>
          <input aria-label="Search" placeholder="Search" className="w-0 grow bg-transparent text-[11px] leading-none outline-none placeholder:text-[#eadcee]" />
          <Ic box="0 0 20 20" className="size-[18px]"><circle cx="10" cy="10" r="9" fill="#2b8bd8" stroke="#fff" strokeWidth="1.200" /><path d="M7 4v9l3 2 4-2.500-4-3" fill="none" stroke="#fff" strokeWidth="2.200" /></Ic>
        </label>
        <div className="ml-[13px] flex w-[350px] items-center justify-between">
          {apps.map((a) => (
            <button key={a.name} type="button" aria-label={a.name} className="relative">
              <Ic box="0 0 24 24" className="size-5 overflow-visible">{a.art}</Ic>
              {a.name === "Edge" && <span className="absolute -bottom-1 left-2 h-0.5 w-1.5 rounded-full bg-[#d9c2df]" />}
            </button>
          ))}
          <button type="button" aria-label="Packet Tracer" className="relative -mx-[7px] flex h-9 w-[34px] items-center justify-center rounded bg-white/10">
            <Ic className="size-5">
              <path d="M2 6l4-5 8 2-1 5-6 4z" fill="#2c251f" />
              <path d="M6 1l9 2-2 4-5-2z" fill="#d8b24a" />
              <circle cx="5" cy="8" r="4" fill="#9aa4a0" />
              <path d="M6 5c4-2 5 1 4 4l-4 3z" fill="#2aa137" />
              <path d="M9 11l2 4" stroke="#222" strokeWidth="1.800" />
            </Ic>
            <span className="absolute bottom-0.5 left-2.5 h-0.5 w-3.5 rounded-full bg-[#f0a8f0]" />
          </button>
        </div>
      </div>
      <div className="flex items-center justify-end pr-[17px] text-[10px] leading-[13px]">
        <Ic className="size-2.5"><path d="M2 11l6-6 6 6" fill="none" stroke="#fff" strokeWidth="2" /></Ic>
        <Ic className="ml-[14px] size-[14px]"><path d="M4 12a3.500 3.500 0 010-7c2-4 8-3 8 1 3 0 4 5 0 6z" fill="#d8d4da" /><circle cx="11" cy="11" r="4.500" fill="#d93025" /><path d="M9.500 9.500l3 3M12.500 9.500l-3 3" stroke="#fff" /></Ic>
        <div className="ml-[15px] text-center"><div>ENG</div><div>IN</div></div>
        <Ic className="ml-[14px] size-[13px]"><g fill="none" stroke="#fff" strokeWidth="1.600"><path d="M1 6.500c4-5 10-5 14 0M3.500 9c3-3.500 6-3.500 9 0M6 11.500c1.500-1.500 2.500-1.500 4 0" /></g><circle cx="8" cy="13.500" r="1.400" fill="#fff" /></Ic>
        <Ic className="ml-[7px] size-[13px]"><path d="M1 6h3l4-4v12l-4-4H1zM10.500 6l4.500 4.500M15 6l-4.500 4.500" fill="none" stroke="#fff" strokeWidth="1.500" /></Ic>
        <Ic className="ml-[7px] size-[14px]"><rect x="1" y="4" width="12" height="8" rx="2" fill="none" stroke="#fff" strokeWidth="1.500" /><path d="M3 6h4v4H3zM14 6.500h1.500v3H14z" fill="#fff" /></Ic>
        <div className="ml-3 text-right whitespace-nowrap"><div>13:51</div><div>02-05-2023</div></div>
        <span className="ml-1.5 flex size-[13px] items-center justify-center rounded-full bg-[#d58be0] text-[8px] text-[#3a1a40]">2</span>
      </div>
    </footer>
  );
}

export default function App() {
  return (
    <div className={`flex min-h-screen flex-col bg-[#f0f0f0] text-[#222] ${ARIAL}`}>
      <TitleBar />
      <Toolbars />
      <NavBar />
      <main className="flex grow">
        <Workspace />
        <SimulationPanel />
      </main>
      <StatusBar />
      <BottomPanel />
      <Taskbar />
    </div>
  );
}
